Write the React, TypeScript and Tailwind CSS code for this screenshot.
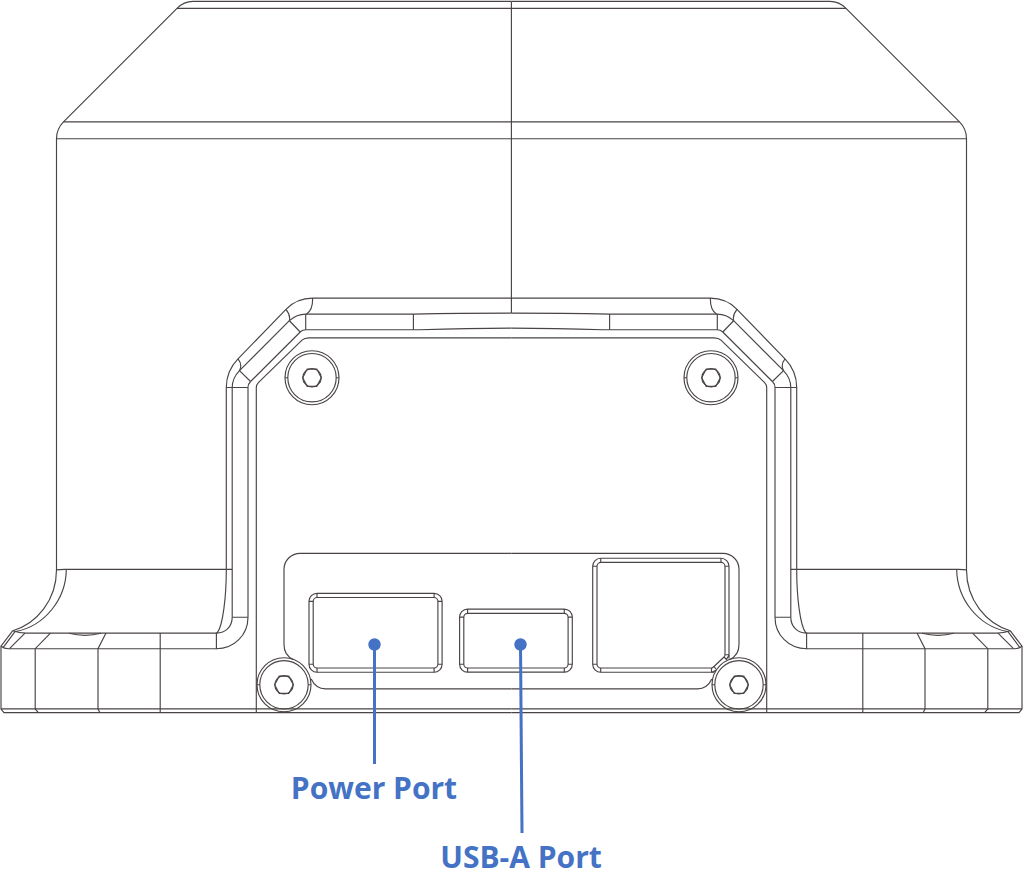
type PortProps = { x: number; y: number; right: number; bottom: number };

function Screw({ x, y }: { x: number; y: number }) {
  return (
    <g transform={`translate(${x} ${y})`}>
      <circle r="27" />
      <circle r="24.2" />
      <circle r="9.2" />
      <path d="M-9.3 0 L-4.8 -8.6 H4.8 L9.3 0 L4.8 8.6 H-4.8 Z" />
      <path d="M-27 0 H-24.2 M24.2 0 H27" />
    </g>
  );
}

function Port({ x, y, right, bottom }: PortProps) {
  const w = right - x;
  const h = bottom - y;
  return (
    <g>
      <rect x={x} y={y} width={w} height={h} rx="8" />
      <rect x={x + 4.2} y={y + 4.2} width={w - 8.4} height={h - 8.4} rx="4" />
      <path
        d={`M${x + 8} ${y} v4.2 M${right - 8} ${y} v4.2 M${x + 8} ${bottom} v-4.2 M${right - 8} ${bottom} v-4.2
        M${x} ${y + 8} h4.2 M${right} ${y + 8} h-4.2 M${x} ${bottom - 8} h4.2 M${right} ${bottom - 8} h-4.2`}
      />
    </g>
  );
}

function HousingHalf() {
  return (
    <g>
      {/* Upper housing */}
      <path d="M511.5 1.4 H193 C186.500 1.4 181.500 3.800 177 8.4 L63.5 121.9 C59 126.400 56.5 132 56.5 138.7 V569.7 C56.5 600 37 623.500 12.800 630.7" />
      <path d="M177 8.4 H511.5 M63.5 121.9 H511.5 M56.5 138.7 H511.5" />
      <path d="M56.5 569.9 Q60 569.300 66.3 569.4 H232.2 M66.3 569.5 C66 599 45 626 15.500 631.600" />
      {/* Foot */}
      <path d="M12.800 630.7 L1 646.2 V709 L4 712.6 H511.5 M1 708.9 H511.5" />
      <path d="M12.800 630.7 Q19 633 26 633.1 H217 M1 646.2 Q4 648.7 8.500 648.7 H216.4" />
      <path d="M15 631.7 L3.300 647.3 M25 633.1 L9.500 648.7" />
      <path d="M50.5 633.1 L35.2 648.7 V709 L38.400 712.6 M106 633.1 L98 648.7 V709 L99.800 712.6 M160.2 633.1 V712.6" />
      <path d="M69 633.3 Q85 637.4 101 633.3" />
      {/* Cover rim */}
      <path d="M511.5 298.1 H312.700 C302 298.1 293 302 286 309.3 L238 358.8 C230 367 226.3 376 226.3 387.5 V569.4 C226.3 596 223 626 217 633.1" />
      <path d="M511.5 313.1 Q460 313.2 413.4 314.1 H305.7 C299 314.1 294 316.500 289.400 320.7 L239.5 370.6 C235 375.200 232.2 380 232.2 387.5 V617.2 C232.2 626.500 225.500 633.1 216.4 633.1 V648.7 C234 648.7 248 635 248 617.2 V387.5 C248 385 249 383 250.6 381.500 L300.2 332 C302 330.200 303.500 329.7 306 329.7 H420 Q470 328.1 511.5 328.1" />
      <path d="M511.5 337.8 H309 C306 337.8 304 338.2 302 340.2 L258.6 382.4 C257 384 256.3 385.2 256.3 387.5 V712.6" />
      <path d="M238 358.8 C241.4 363 241.4 367 239.5 370.6 L250.6 381.5 M286 309.3 C289 313 290.4 316 289.4 320.7 L300.2 332 M312.7 298.1 C312.7 306 311 311.5 306.5 314.1" />
      <path d="M305.7 314.1 V329.7 M413.4 314.1 V329.7 M226.3 387.5 H248 M232.2 617.2 H248" />
      {/* Connector recess */}
      <path d="M511.5 553.3 H300 A16 16 0 0 0 284 569.3 V644.5 C284 651.500 287.500 657 293.4 659.5 M311.2 679 C314 685 319 688.8 325.500 688.8 H511.5" />
      <Screw x={312} y={377.7} />
      <Screw x={284} y={684.8} />
    </g>
  );
}

export default function App() {
  return (
    <main className="w-full bg-white">
      <svg
        viewBox="0 0 1023 893"
        className="block h-auto w-full"
        role="img"
        aria-labelledby="power-label usb-label"
      >
        <g fill="none" stroke="#4a4444" strokeWidth="1.15">
          <HousingHalf />
          <g transform="translate(1023 0) scale(-1 1)">
            <HousingHalf />
          </g>
          <path d="M511.4 1.4 V313.1" />
          <Port x={309} y={593.3} right={442.1} bottom={672.2} />
          <Port x={459.6} y={609.1} right={572.3} bottom={672.2} />
          {/* Square port, its lower right corner cut back beside the screw */}
          <path d="M714 672.2 H600.7 A8 8 0 0 1 592.7 664.2 V566.2 A8 8 0 0 1 600.7 558.2 H721 A8 8 0 0 1 729 566.2 V658.500 M711.500 668 H601 A4 4 0 0 1 597 664 V566.400 A4 4 0 0 1 601 562.4 H721 A4 4 0 0 1 725 566.400 V654.5 Q725 656 724 657 L714 666.500 Q712.500 668 711.500 668" />
          <path d="M600.7 558.2 V562.4 M721 558.2 V562.4 M592.7 566.2 H597 M725 566.2 H729 M592.7 664.2 H597 M600.7 668 V672.2 M725 654.7 H729 M711.500 668 V672.2 M729 655 Q728.500 657 726.500 659 M711.5 672.2 Q714 672.2 716 670 M714 666.5 L716 669 M724 657 L727 660" />
        </g>

        <g stroke="#4472c4" strokeWidth="3">
          <path d="M374.500 644.500 V764" />
          <path d="M520.500 644.500 L522 833" />
        </g>
        <g fill="#4472c4">
          <circle cx="374.5" cy="644.5" r="6.2" />
          <circle cx="520.5" cy="644.5" r="6.2" />
        </g>
        <g className="fill-[#4472c4] font-['Open_Sans','Noto_Sans',sans-serif] text-[30px] font-bold">
          <text id="power-label" x="374" y="799" textAnchor="middle">
            Power Port
          </text>
          <text id="usb-label" x="521" y="868" textAnchor="middle">
            USB-A Port
          </text>
        </g>
      </svg>
    </main>
  );
}
